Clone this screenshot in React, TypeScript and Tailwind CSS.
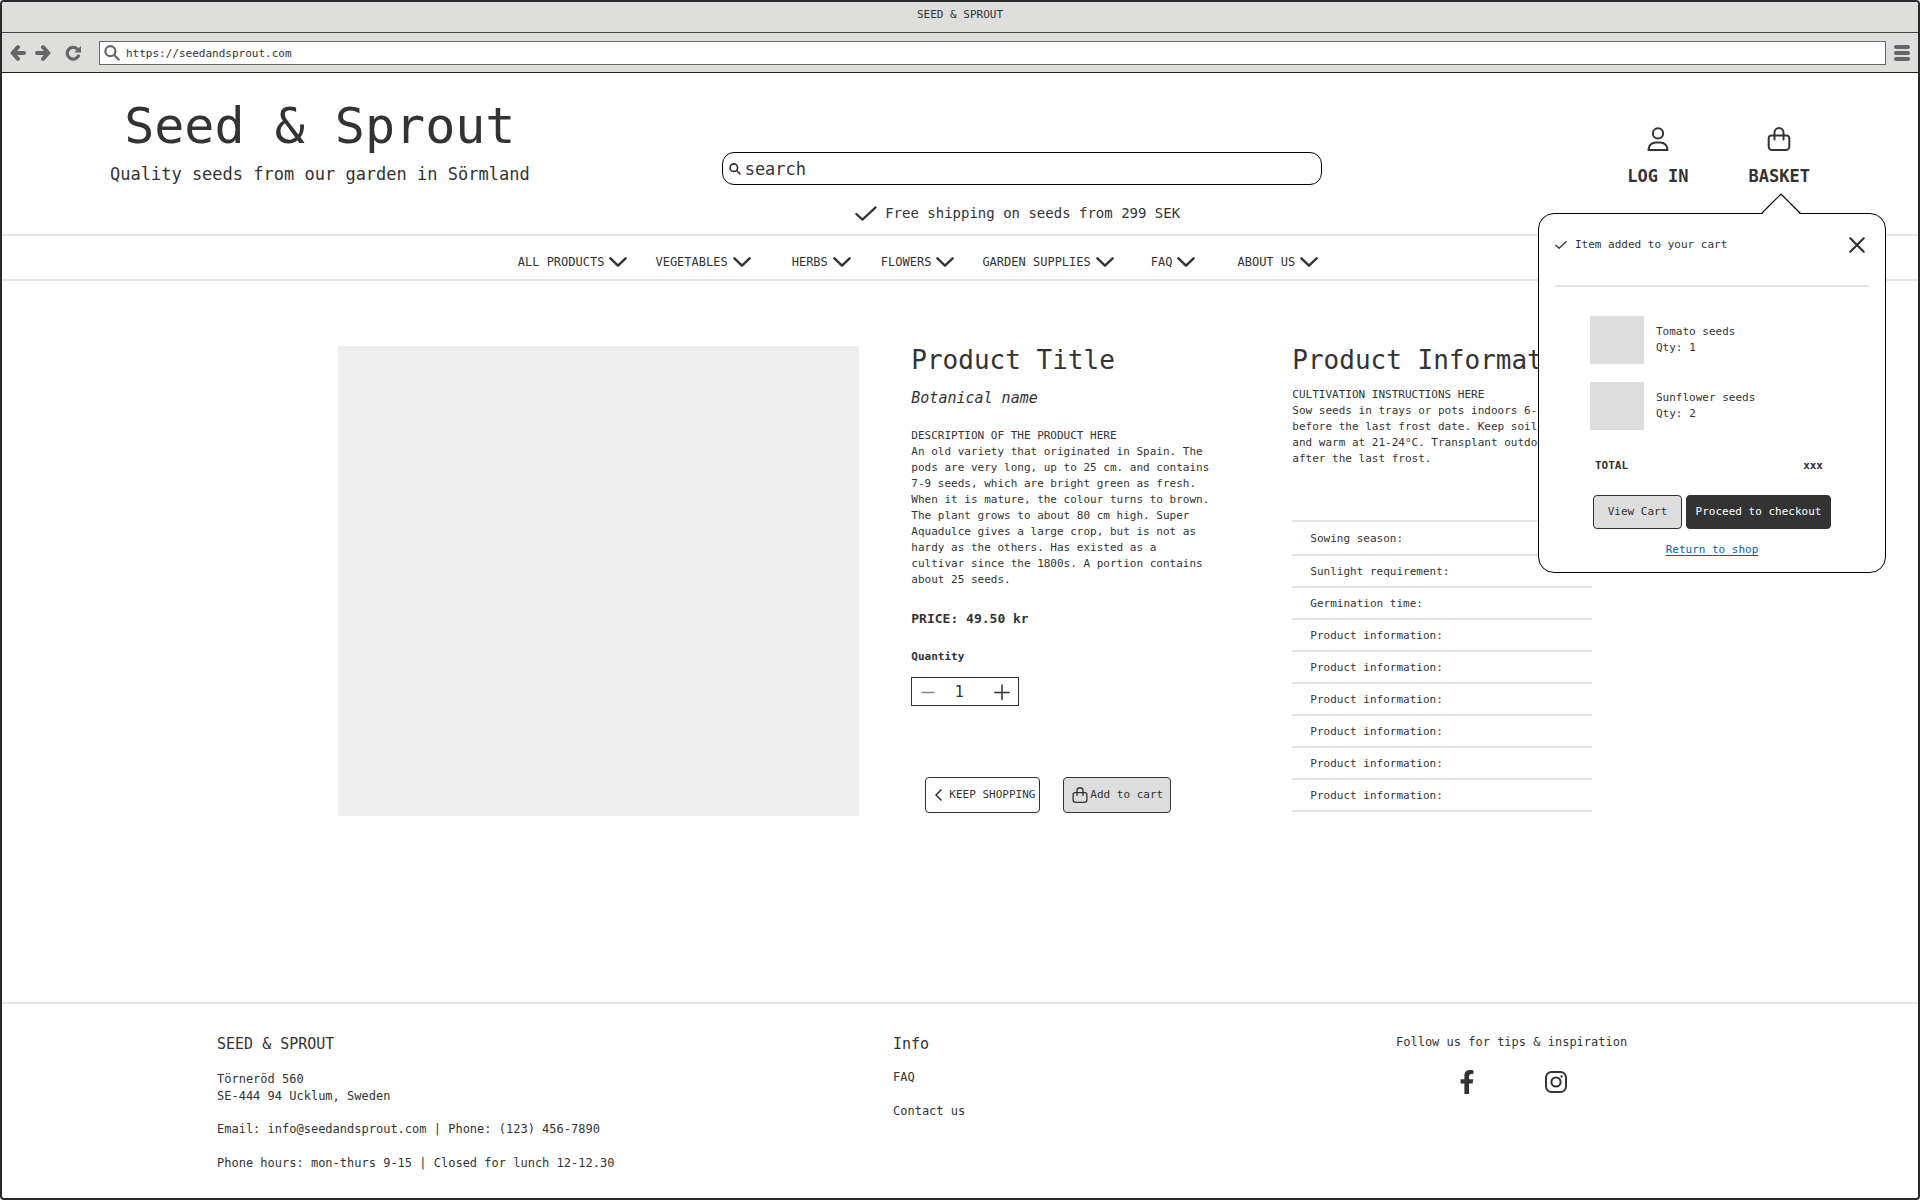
import React from "react";
import { FaFacebookF } from "react-icons/fa";

const NAV = [
  { label: "ALL PRODUCTS", space: "" },
  { label: "VEGETABLES", space: "ml-7" },
  { label: "HERBS", space: "ml-[41px]" },
  { label: "FLOWERS", space: "ml-[30px]" },
  { label: "GARDEN SUPPLIES", space: "ml-7" },
  { label: "FAQ", space: "ml-[37px]" },
  { label: "ABOUT US", space: "ml-[42px]" },
];

const FACTS = [
  "Sowing season:",
  "Sunlight requirement:",
  "Germination time:",
  "Product information:",
  "Product information:",
  "Product information:",
  "Product information:",
  "Product information:",
  "Product information:",
];

const CART = [
  { name: "Tomato seeds", qty: 1 },
  { name: "Sunflower seeds", qty: 2 },
];

type IconProps = { className?: string };

const line = {
  fill: "none",
  stroke: "currentColor",
  strokeLinecap: "round" as const,
  strokeLinejoin: "round" as const,
  "aria-hidden": true,
};

function ArrowIcon({ className }: IconProps) {
  return (
    <svg viewBox="0 0 16 16" className={className} {...line} strokeWidth={4}>
      <path d="M14 8H4M8 2.2 2.6 8 8 13.8" />
    </svg>
  );
}

function ReloadIcon({ className }: IconProps) {
  return (
    <svg viewBox="0 0 16 16" className={className} aria-hidden>
      <path
        d="M12.2 3.9A5.9 5.9 0 1 0 13.4 11"
        fill="none"
        stroke="currentColor"
        strokeWidth="3.2"
        strokeLinecap="round"
      />
      <path d="M16 1v6.6H9.2z" fill="currentColor" />
    </svg>
  );
}

function SearchIcon({ className, weight = 2 }: IconProps & { weight?: number }) {
  return (
    <svg viewBox="0 0 16 16" className={className} {...line} strokeWidth={weight}>
      <circle cx="6.4" cy="6.2" r="5" />
      <path d="m10.2 10 4.4 4.6" />
    </svg>
  );
}

function ChevronDown() {
  return (
    <svg viewBox="0 0 18 10" className="h-[10px] w-[18px]" {...line} strokeWidth={2.4}>
      <path d="m1.4 1.3 7.6 7.4 7.6-7.4" />
    </svg>
  );
}

function CheckIcon({ className, weight }: IconProps & { weight: number }) {
  return (
    <svg viewBox="0 0 22 15" className={className} {...line} strokeWidth={weight}>
      <path d="m1.4 8 6 5.6L20.6 1.4" />
    </svg>
  );
}

function UserIcon({ className }: IconProps) {
  return (
    <svg viewBox="0 0 24 24" className={className} {...line} strokeWidth={2}>
      <circle cx="12" cy="6.4" r="5.1" />
      <path d="M2.4 23c0-4.6 3.4-7.4 7.4-7.4h4.4c4 0 7.4 2.8 7.4 7.4z" />
    </svg>
  );
}

function BagIcon({ className }: IconProps) {
  return (
    <svg viewBox="0 0 24 24" className={className} {...line} strokeWidth={2}>
      <path d="M4.2 8.500h15.600a2.500 2.500 0 0 1 2.500 2.500v8.500a3.500 3.500 0 0 1-3.500 3.500H5.200a3.500 3.500 0 0 1-3.500-3.500V11a2.500 2.500 0 0 1 2.500-2.500z" />
      <path d="M7.500 12.500V5.600a4.500 4.500 0 0 1 9 0v6.900" />
    </svg>
  );
}

function InstagramIcon({ className }: IconProps) {
  return (
    <svg viewBox="0 0 22 22" className={className} {...line} strokeWidth={2}>
      <rect x="1" y="1" width="20" height="20" rx="5.5" />
      <circle cx="11" cy="11" r="4.6" />
      <circle cx="16.6" cy="5.5" r="0.5" strokeWidth={1.4} />
    </svg>
  );
}

function BrowserBar() {
  return (
    <div className="bg-[#dededc] text-[11px] leading-4">
      <div className="h-[31px] border-b border-[#444] pt-[5px] text-center">SEED &amp; SPROUT</div>
      <div className="flex h-10 items-center border-b border-[#231f20] pl-2 pr-2 text-[#666]">
        <button aria-label="Back">
          <ArrowIcon className="size-4" />
        </button>
        <button aria-label="Forward" className="ml-[9px]">
          <ArrowIcon className="size-4 rotate-180" />
        </button>
        <button aria-label="Reload" className="ml-[14px]">
          <ReloadIcon className="size-4" />
        </button>
        <label className="ml-[18px] mr-2 flex h-6 flex-1 items-center gap-[6px] border border-[#666] bg-white pl-1">
          <SearchIcon className="size-4" weight={2.2} />
          <input
            aria-label="Address"
            className="min-w-0 flex-1 pt-0.5 text-[#333] outline-none"
            defaultValue="https://seedandsprout.com"
          />
        </label>
        <button aria-label="Menu" className="flex flex-col gap-[2px]">
          <span className="h-1 w-4 rounded-full bg-[#666]" />
          <span className="h-1 w-4 rounded-full bg-[#666]" />
          <span className="h-1 w-4 rounded-full bg-[#666]" />
        </button>
      </div>
    </div>
  );
}

function CartPopover() {
  return (
    <section
      aria-label="Cart"
      className="absolute right-8 top-[140px] z-10 w-[348px] rounded-2xl border border-black bg-white px-4 pb-[14px] pt-[23px] text-[11px] leading-4"
    >
      <svg
        viewBox="0 0 40 21"
        className="absolute -top-[21px] right-[84px] h-[21px] w-10"
        aria-hidden
      >
        <path d="M1 21 20 1.2 39 21z" fill="white" />
        <path d="M0.5 20.5 20 1l19.5 19.5" fill="none" stroke="black" strokeWidth="1.2" />
      </svg>
      <div className="flex h-4 items-center">
        <CheckIcon className="h-2 w-3" weight={2.4} />
        <p className="ml-2">Item added to your cart</p>
        <button aria-label="Close" className="ml-auto mr-1">
          <svg viewBox="0 0 16 16" className="size-4" {...line} strokeWidth={2.2}>
            <path d="m1.3 1.3 13.4 13.4M14.7 1.3 1.3 14.7" />
          </svg>
        </button>
      </div>
      <hr className="mt-8 border-t-2 border-[#e4e4e4]" />
      <ul className="ml-[35px] mt-[29px] flex flex-col gap-[18px]">
        {CART.map((item) => (
          <li key={item.name} className="flex items-center gap-3">
            <div className="h-12 w-[54px] bg-[#ddd]" />
            <p>
              {item.name}
              <br />
              Qty: {item.qty}
            </p>
          </li>
        ))}
      </ul>
      <div className="mt-7 flex justify-between pl-10 pr-[46px] font-bold">
        <span>TOTAL</span>
        <span>xxx</span>
      </div>
      <div className="mt-[21px] flex justify-center gap-1">
        <button className="h-[34px] w-[89px] rounded border border-[#333] bg-[#ddd]">View Cart</button>
        <button className="h-[34px] w-[145px] rounded border border-[#333] bg-[#333] text-white">
          Proceed to checkout
        </button>
      </div>
      <p className="mt-[13px] text-center">
        <a href="#" className="text-[#0b5cad] underline underline-offset-2">
          Return to shop
        </a>
      </p>
    </section>
  );
}

function Header() {
  return (
    <header className="relative">
      <div className="flex h-[163px] items-start border-b-2 border-[#e4e4e4] px-[108px]">
        <div className="mt-[23px] shrink-0 text-center">
          <h1 className="text-[50px] leading-[60px]">Seed &amp; Sprout</h1>
          <p className="mt-1.5 text-[17px] leading-6">Quality seeds from our garden in Sörmland</p>
        </div>
        <div className="ml-48 mt-[79px] w-[600px]">
          <label className="flex h-[33px] items-center gap-1 rounded-xl border border-black pl-[6px]">
            <SearchIcon className="size-3" weight={2.2} />
            <input
              type="text"
              aria-label="Search"
              placeholder="search"
              className="min-w-0 flex-1 text-[17px] leading-6 outline-none placeholder:text-[#333] placeholder:opacity-100"
            />
          </label>
          <p className="mt-[18px] flex items-center justify-center gap-2 pr-2 text-[14px] leading-5">
            <CheckIcon className="h-[15px] w-[22px]" weight={2.2} />
            Free shipping on seeds from 299 SEK
          </p>
        </div>
        <div className="ml-auto mt-[54px] flex gap-[60px] text-[17px] font-bold leading-6">
          <button className="flex flex-col items-center gap-[13px]">
            <UserIcon className="size-6" />
            LOG IN
          </button>
          <button className="flex flex-col items-center gap-[13px]">
            <BagIcon className="size-6" />
            BASKET
          </button>
        </div>
      </div>
      <nav className="flex h-[45px] items-center justify-center border-b-2 border-[#e4e4e4] pr-[84px] pt-2 text-[12px] leading-4">
        {NAV.map((item) => (
          <button key={item.label} className={`flex items-center gap-[5px] ${item.space}`}>
            {item.label}
            <ChevronDown />
          </button>
        ))}
      </nav>
      <CartPopover />
    </header>
  );
}

function Product() {
  return (
    <main className="flex items-start pl-[17.5%] pt-[65px]">
      <div className="ml-px h-[470px] w-[521px] shrink-0 bg-[#eee]" />
      <section className="ml-[52px] w-[300px] shrink-0">
        <h2 className="text-[26px] leading-7">Product Title</h2>
        <p className="mt-3 text-[15px] italic leading-6">Botanical name</p>
        <p className="mt-[18px] text-[11px] leading-4">
          DESCRIPTION OF THE PRODUCT HERE
          <br />
          An old variety that originated in Spain. The pods are very long, up to 25 cm. and contains
          7-9 seeds, which are bright green as fresh. When it is mature, the colour turns to brown.
          The plant grows to about 80 cm high. Super Aquadulce gives a large crop, but is not as
          hardy as the others. Has existed as a cultivar since the 1800s. A portion contains about
          25 seeds.
        </p>
        <p className="mt-[21px] text-[13px] font-bold leading-5">PRICE: 49.50 kr</p>
        <p className="mt-5 text-[11px] font-bold leading-4">Quantity</p>
        <div className="mt-3 flex h-[29px] w-[108px] items-center justify-between border border-[#333] px-2">
          <button aria-label="Decrease quantity" className="text-[#888]">
            <svg viewBox="0 0 16 16" className="size-4" {...line} strokeWidth={1.5}>
              <path d="M2 8.500h12" />
            </svg>
          </button>
          <output className="mr-3 text-[15px] leading-5">1</output>
          <button aria-label="Increase quantity">
            <svg viewBox="0 0 16 16" className="size-4" {...line} strokeWidth={1.5}>
              <path d="M0.8 8.500h14.400M8 1v14.500" />
            </svg>
          </button>
        </div>
        <div className="ml-[14px] mt-[71px] flex gap-[23px] text-[11px] leading-4">
          <button className="flex h-9 w-[115px] items-center gap-[7px] whitespace-nowrap rounded border border-[#333] pl-[9px]">
            <svg viewBox="0 0 7 12" className="h-3 w-[7px] shrink-0" {...line} strokeWidth={1.6}>
              <path d="M6 1 1 6l5 5" />
            </svg>
            KEEP SHOPPING
          </button>
          <button className="flex h-9 w-[108px] items-center gap-0.5 whitespace-nowrap rounded border border-[#333] bg-[#ddd] pl-2">
            <BagIcon className="size-4 shrink-0" />
            Add to cart
          </button>
        </div>
      </section>
      <section className="ml-[81px] w-[300px] shrink-0">
        <h2 className="whitespace-nowrap text-[26px] leading-7">Product Information</h2>
        <p className="mt-[13px] text-[11px] leading-4">
          CULTIVATION INSTRUCTIONS HERE
          <br />
          Sow seeds in trays or pots indoors 6-8 weeks before the last frost date. Keep soil moist
          and warm at 21-24°C. Transplant outdoors after the last frost.
        </p>
        <table className="mt-[53px] w-full border-t-2 border-[#e4e4e4] text-left text-[11px] leading-4">
          <tbody>
            {FACTS.map((fact, i) => (
              <tr key={i} className="h-8 border-b-2 border-[#e4e4e4] first:h-[34px]">
                <th scope="row" className="pb-0 pl-[18px] pt-0.5 font-normal">
                  {fact}
                </th>
              </tr>
            ))}
          </tbody>
        </table>
      </section>
    </main>
  );
}

function Footer() {
  return (
    <footer className="mt-auto grid grid-cols-[676fr_503fr_522fr] border-t-2 border-[#e4e4e4] pb-[26px] pl-[215px] pt-7 text-[12px] leading-[17px]">
      <div>
        <h3 className="text-[15px] leading-6">SEED &amp; SPROUT</h3>
        <p className="mt-[15px]">
          Törneröd 560
          <br />
          SE-444 94 Ucklum, Sweden
        </p>
        <p className="mt-4">Email: info@seedandsprout.com | Phone: (123) 456-7890</p>
        <p className="mt-[17px]">Phone hours: mon-thurs 9-15 | Closed for lunch 12-12.30</p>
      </div>
      <div className="flex flex-col items-start">
        <h3 className="text-[15px] leading-6">Info</h3>
        <a href="#" className="mt-[13px]">
          FAQ
        </a>
        <a href="#" className="mt-[17px]">
          Contact us
        </a>
      </div>
      <div>
        <p className="mt-0.5">Follow us for tips &amp; inspiration</p>
        <div className="ml-[59px] mt-[19px] flex items-center gap-[66px]">
          <a href="#" aria-label="Facebook">
            <FaFacebookF className="size-6" />
          </a>
          <a href="#" aria-label="Instagram">
            <InstagramIcon className="size-[22px]" />
          </a>
        </div>
      </div>
    </footer>
  );
}

export default function App() {
  return (
    <div className="flex min-h-screen flex-col overflow-hidden rounded-[4px] border-2 border-[#2b2829] bg-white font-['DejaVu_Sans_Mono',monospace] text-[#333]">
      <BrowserBar />
      <Header />
      <Product />
      <Footer />
    </div>
  );
}
